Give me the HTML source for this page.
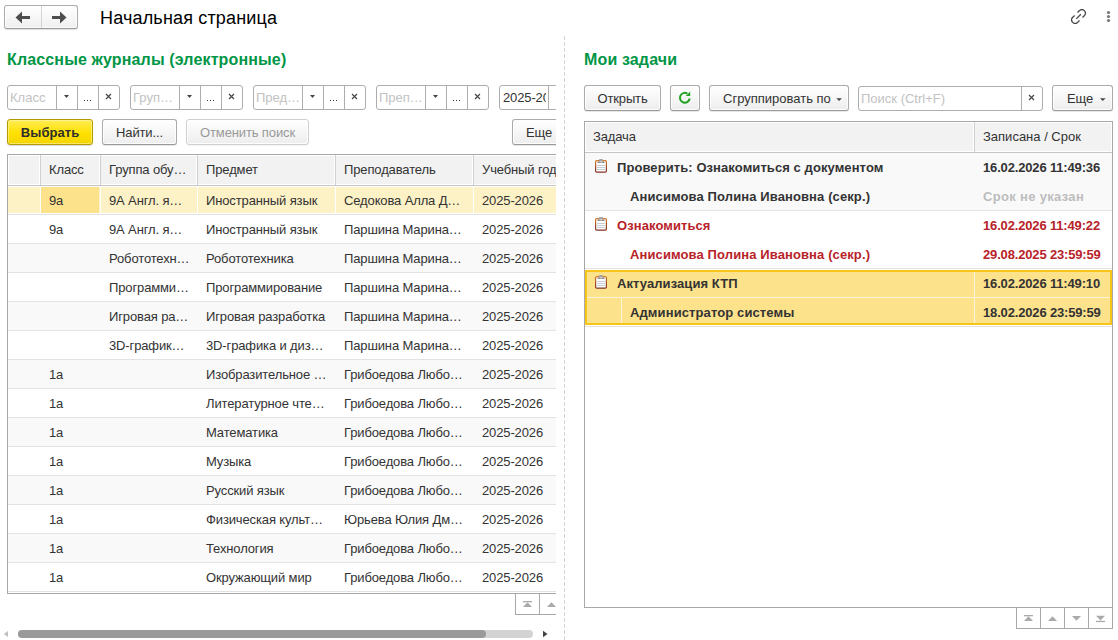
<!DOCTYPE html><html><head><meta charset="utf-8"><style>
*{box-sizing:border-box;margin:0;padding:0}
html,body{width:1118px;height:640px;overflow:hidden;background:#fff}
body{position:relative;font-family:"Liberation Sans",sans-serif;font-size:13px;color:#333}
.a{position:absolute}
.t{position:absolute;white-space:nowrap;letter-spacing:-0.13px}
.b{font-weight:bold;letter-spacing:0.08px}
.btn{position:absolute;height:26px;line-height:25px;border:1px solid #ababab;border-bottom-color:#999;border-radius:3px;background:linear-gradient(#fff,#ededed);box-shadow:inset 0 0 0 1px rgba(255,255,255,.85),0 1px 1px rgba(0,0,0,.10);color:#333;text-align:center;white-space:nowrap;letter-spacing:-0.13px}
.fld{position:absolute;height:25px;border:1px solid #adadad;border-radius:3px;background:#fff;overflow:hidden}
.ph{position:absolute;white-space:nowrap;letter-spacing:0;color:#c2c2c2}
.vs{position:absolute;width:1px;background:#adadad}
.green{color:#009646;font-weight:bold;font-size:16px;letter-spacing:0.14px}
</style></head><body>
<div class="a" style="left:4px;top:5px;width:74px;height:24px;border:1px solid #adadad;border-bottom-color:#9a9a9a;border-radius:3px;background:linear-gradient(#fff,#efefef);box-shadow:inset 0 0 0 1px rgba(255,255,255,.85),0 1px 1px rgba(0,0,0,.12)"></div>
<div class="a" style="left:41px;top:6px;width:1px;height:22px;background:#d4d4d4"></div>
<svg class="a" style="left:0;top:0" width="80" height="40">
<polygon points="15.5,17.5 22,11.5 22,23.5" fill="#4d4d4d"/><rect x="22" y="16" width="8" height="3" fill="#4d4d4d"/>
<polygon points="66.5,17.5 60,11.5 60,23.5" fill="#4d4d4d"/><rect x="52" y="16" width="8" height="3" fill="#4d4d4d"/></svg>
<div class="t" style="left:100px;top:5.5px;font-size:18px;line-height:24px;color:#000;letter-spacing:0.17px">Начальная страница</div>
<svg class="a" style="left:1071px;top:9px" width="15" height="15" fill="none" stroke="#444" stroke-width="1.25">
<path d="M6.5,3.5 L8.53,1.53 A3.5,3.5 0 0 1 13.47,6.47 L11.5,8.5"/><path d="M3.6,6.5 L1.53,8.53 A3.5,3.5 0 0 0 6.47,13.47 L8.5,11.5"/><path d="M5.2,9.9 L9.9,5.2"/></svg>
<svg class="a" style="left:1105px;top:9px" width="8" height="16" fill="#777"><circle cx="3.5" cy="3.5" r="1.6"/><circle cx="3.5" cy="7.5" r="1.6"/><circle cx="3.5" cy="11.5" r="1.6"/></svg>
<div class="a" style="left:564px;top:36px;width:1px;height:604px;background:repeating-linear-gradient(#d4d4d4 0 4px,transparent 4px 6px)"></div>
<div class="a" style="left:0;top:0;width:556px;height:640px;overflow:hidden">
<div class="t green" style="left:7px;top:51px;line-height:18px">Классные журналы (электронные)</div>
<div class="fld" style="left:7px;top:85px;width:113px">
<div class="ph" style="left:2px;top:0;width:44px;line-height:23px;color:#c2c2c2;overflow:hidden;letter-spacing:0">Класс</div>
<div class="vs" style="left:48px;top:0;height:23px"></div>
<div class="vs" style="left:69px;top:0;height:23px"></div>
<div class="vs" style="left:90px;top:0;height:23px"></div>
<svg class="a" style="left:0;top:0" width="111" height="23"><polygon points="56,9 61,9 58.5,12" fill="#444"/><rect x="76" y="14" width="1" height="1" fill="#333"/><rect x="79" y="14" width="1" height="1" fill="#333"/><rect x="82" y="14" width="1" height="1" fill="#333"/><path d="M98,8 L103,13 M103,8 L98,13" stroke="#444" stroke-width="1.15"/></svg>
</div>
<div class="fld" style="left:130px;top:85px;width:113px">
<div class="ph" style="left:2px;top:0;width:44px;line-height:23px;color:#c2c2c2;overflow:hidden;letter-spacing:0">Груп…</div>
<div class="vs" style="left:48px;top:0;height:23px"></div>
<div class="vs" style="left:69px;top:0;height:23px"></div>
<div class="vs" style="left:90px;top:0;height:23px"></div>
<svg class="a" style="left:0;top:0" width="111" height="23"><polygon points="56,9 61,9 58.5,12" fill="#444"/><rect x="76" y="14" width="1" height="1" fill="#333"/><rect x="79" y="14" width="1" height="1" fill="#333"/><rect x="82" y="14" width="1" height="1" fill="#333"/><path d="M98,8 L103,13 M103,8 L98,13" stroke="#444" stroke-width="1.15"/></svg>
</div>
<div class="fld" style="left:253px;top:85px;width:113px">
<div class="ph" style="left:2px;top:0;width:44px;line-height:23px;color:#c2c2c2;overflow:hidden;letter-spacing:0">Пред…</div>
<div class="vs" style="left:48px;top:0;height:23px"></div>
<div class="vs" style="left:69px;top:0;height:23px"></div>
<div class="vs" style="left:90px;top:0;height:23px"></div>
<svg class="a" style="left:0;top:0" width="111" height="23"><polygon points="56,9 61,9 58.5,12" fill="#444"/><rect x="76" y="14" width="1" height="1" fill="#333"/><rect x="79" y="14" width="1" height="1" fill="#333"/><rect x="82" y="14" width="1" height="1" fill="#333"/><path d="M98,8 L103,13 M103,8 L98,13" stroke="#444" stroke-width="1.15"/></svg>
</div>
<div class="fld" style="left:376px;top:85px;width:113px">
<div class="ph" style="left:2px;top:0;width:44px;line-height:23px;color:#c2c2c2;overflow:hidden;letter-spacing:0">Преп…</div>
<div class="vs" style="left:48px;top:0;height:23px"></div>
<div class="vs" style="left:69px;top:0;height:23px"></div>
<div class="vs" style="left:90px;top:0;height:23px"></div>
<svg class="a" style="left:0;top:0" width="111" height="23"><polygon points="56,9 61,9 58.5,12" fill="#444"/><rect x="76" y="14" width="1" height="1" fill="#333"/><rect x="79" y="14" width="1" height="1" fill="#333"/><rect x="82" y="14" width="1" height="1" fill="#333"/><path d="M98,8 L103,13 M103,8 L98,13" stroke="#444" stroke-width="1.15"/></svg>
</div>
<div class="fld" style="left:499px;top:85px;width:113px">
<div class="ph" style="left:3px;top:0;width:43px;line-height:23px;color:#333;overflow:hidden;letter-spacing:-0.13px">2025-2026</div>
<div class="vs" style="left:48px;top:0;height:23px"></div>
<div class="vs" style="left:69px;top:0;height:23px"></div>
<div class="vs" style="left:90px;top:0;height:23px"></div>
<svg class="a" style="left:0;top:0" width="111" height="23"><polygon points="56,9 61,9 58.5,12" fill="#444"/><rect x="76" y="14" width="1" height="1" fill="#333"/><rect x="79" y="14" width="1" height="1" fill="#333"/><rect x="82" y="14" width="1" height="1" fill="#333"/><path d="M98,8 L103,13 M103,8 L98,13" stroke="#444" stroke-width="1.15"/></svg>
</div>
<div class="btn" style="left:7px;top:119px;width:86px;font-weight:bold;letter-spacing:0.05px;color:#2d2d2d;background:linear-gradient(#ffec55,#ffe100 55%,#f3d400);border-color:#b39a00;box-shadow:inset 0 0 0 1px rgba(255,250,200,.5),0 1px 1px rgba(0,0,0,.15)">Выбрать</div>
<div class="btn" style="left:102px;top:119px;width:75px">Найти...</div>
<div class="btn" style="left:186px;top:119px;width:123px;color:#999;border-color:#d0d0d0;box-shadow:inset 0 0 0 1px rgba(255,255,255,.85),0 1px 1px rgba(0,0,0,.05)">Отменить поиск</div>
<div class="btn" style="left:512px;top:119px;width:60px;text-align:left;padding-left:13px">Еще</div>
<div class="a" style="left:7px;top:154px;width:600px;height:440px;border:1px solid #a8a8a8;background:#fff"></div>
<div class="a" style="left:8px;top:155px;width:32px;height:30px;background:#f2f2f2;border:1px solid #fff"></div>
<div class="a" style="left:40px;top:155px;width:60px;height:30px;background:#f2f2f2;border:1px solid #fff"></div>
<div class="a" style="left:40px;top:155px;width:1px;height:30px;background:#d0d0d0"></div>
<div class="t" style="left:49px;top:155px;line-height:30px">Класс</div>
<div class="a" style="left:100px;top:155px;width:97px;height:30px;background:#f2f2f2;border:1px solid #fff"></div>
<div class="a" style="left:100px;top:155px;width:1px;height:30px;background:#d0d0d0"></div>
<div class="t" style="left:109px;top:155px;line-height:30px">Группа обу…</div>
<div class="a" style="left:197px;top:155px;width:138px;height:30px;background:#f2f2f2;border:1px solid #fff"></div>
<div class="a" style="left:197px;top:155px;width:1px;height:30px;background:#d0d0d0"></div>
<div class="t" style="left:206px;top:155px;line-height:30px">Предмет</div>
<div class="a" style="left:335px;top:155px;width:138px;height:30px;background:#f2f2f2;border:1px solid #fff"></div>
<div class="a" style="left:335px;top:155px;width:1px;height:30px;background:#d0d0d0"></div>
<div class="t" style="left:344px;top:155px;line-height:30px">Преподаватель</div>
<div class="a" style="left:473px;top:155px;width:147px;height:30px;background:#f2f2f2;border:1px solid #fff"></div>
<div class="a" style="left:473px;top:155px;width:1px;height:30px;background:#d0d0d0"></div>
<div class="t" style="left:482px;top:155px;line-height:30px">Учебный год</div>
<div class="a" style="left:8px;top:185px;width:600px;height:1px;background:#c6c6c6"></div>
<div class="a" style="left:8px;top:187px;width:600px;height:26px;background:#fdf1c6"></div>
<div class="a" style="left:41px;top:187px;width:58px;height:26px;background:#fde28c"></div>
<div class="a" style="left:40px;top:186px;width:1px;height:28px;background:#fff"></div>
<div class="a" style="left:100px;top:186px;width:1px;height:28px;background:#fff"></div>
<div class="a" style="left:197px;top:186px;width:1px;height:28px;background:#fff"></div>
<div class="a" style="left:335px;top:186px;width:1px;height:28px;background:#fff"></div>
<div class="a" style="left:473px;top:186px;width:1px;height:28px;background:#fff"></div>
<div class="a" style="left:8px;top:214px;width:600px;height:1px;background:#e2e2e2"></div>
<div class="t" style="left:49px;top:186px;line-height:29px">9а</div>
<div class="t" style="left:109px;top:186px;line-height:29px">9А Англ. я…</div>
<div class="t" style="left:206px;top:186px;line-height:29px">Иностранный язык</div>
<div class="t" style="left:344px;top:186px;line-height:29px">Седокова Алла Д…</div>
<div class="t" style="left:482px;top:186px;line-height:29px">2025-2026</div>
<div class="a" style="left:8px;top:243px;width:600px;height:1px;background:#e2e2e2"></div>
<div class="t" style="left:49px;top:215px;line-height:29px">9а</div>
<div class="t" style="left:109px;top:215px;line-height:29px">9А Англ. я…</div>
<div class="t" style="left:206px;top:215px;line-height:29px">Иностранный язык</div>
<div class="t" style="left:344px;top:215px;line-height:29px">Паршина Марина…</div>
<div class="t" style="left:482px;top:215px;line-height:29px">2025-2026</div>
<div class="a" style="left:8px;top:244px;width:600px;height:28px;background:#f9f9f9"></div>
<div class="a" style="left:8px;top:272px;width:600px;height:1px;background:#e2e2e2"></div>
<div class="t" style="left:109px;top:244px;line-height:29px">Робототехн…</div>
<div class="t" style="left:206px;top:244px;line-height:29px">Робототехника</div>
<div class="t" style="left:344px;top:244px;line-height:29px">Паршина Марина…</div>
<div class="t" style="left:482px;top:244px;line-height:29px">2025-2026</div>
<div class="a" style="left:8px;top:301px;width:600px;height:1px;background:#e2e2e2"></div>
<div class="t" style="left:109px;top:273px;line-height:29px">Программи…</div>
<div class="t" style="left:206px;top:273px;line-height:29px">Программирование</div>
<div class="t" style="left:344px;top:273px;line-height:29px">Паршина Марина…</div>
<div class="t" style="left:482px;top:273px;line-height:29px">2025-2026</div>
<div class="a" style="left:8px;top:302px;width:600px;height:28px;background:#f9f9f9"></div>
<div class="a" style="left:8px;top:330px;width:600px;height:1px;background:#e2e2e2"></div>
<div class="t" style="left:109px;top:302px;line-height:29px">Игровая ра…</div>
<div class="t" style="left:206px;top:302px;line-height:29px">Игровая разработка</div>
<div class="t" style="left:344px;top:302px;line-height:29px">Паршина Марина…</div>
<div class="t" style="left:482px;top:302px;line-height:29px">2025-2026</div>
<div class="a" style="left:8px;top:359px;width:600px;height:1px;background:#e2e2e2"></div>
<div class="t" style="left:109px;top:331px;line-height:29px">3D-график…</div>
<div class="t" style="left:206px;top:331px;line-height:29px">3D-графика и диз…</div>
<div class="t" style="left:344px;top:331px;line-height:29px">Паршина Марина…</div>
<div class="t" style="left:482px;top:331px;line-height:29px">2025-2026</div>
<div class="a" style="left:8px;top:360px;width:600px;height:28px;background:#f9f9f9"></div>
<div class="a" style="left:8px;top:388px;width:600px;height:1px;background:#e2e2e2"></div>
<div class="t" style="left:49px;top:360px;line-height:29px">1а</div>
<div class="t" style="left:206px;top:360px;line-height:29px">Изобразительное …</div>
<div class="t" style="left:344px;top:360px;line-height:29px">Грибоедова Любо…</div>
<div class="t" style="left:482px;top:360px;line-height:29px">2025-2026</div>
<div class="a" style="left:8px;top:417px;width:600px;height:1px;background:#e2e2e2"></div>
<div class="t" style="left:49px;top:389px;line-height:29px">1а</div>
<div class="t" style="left:206px;top:389px;line-height:29px">Литературное чте…</div>
<div class="t" style="left:344px;top:389px;line-height:29px">Грибоедова Любо…</div>
<div class="t" style="left:482px;top:389px;line-height:29px">2025-2026</div>
<div class="a" style="left:8px;top:418px;width:600px;height:28px;background:#f9f9f9"></div>
<div class="a" style="left:8px;top:446px;width:600px;height:1px;background:#e2e2e2"></div>
<div class="t" style="left:49px;top:418px;line-height:29px">1а</div>
<div class="t" style="left:206px;top:418px;line-height:29px">Математика</div>
<div class="t" style="left:344px;top:418px;line-height:29px">Грибоедова Любо…</div>
<div class="t" style="left:482px;top:418px;line-height:29px">2025-2026</div>
<div class="a" style="left:8px;top:475px;width:600px;height:1px;background:#e2e2e2"></div>
<div class="t" style="left:49px;top:447px;line-height:29px">1а</div>
<div class="t" style="left:206px;top:447px;line-height:29px">Музыка</div>
<div class="t" style="left:344px;top:447px;line-height:29px">Грибоедова Любо…</div>
<div class="t" style="left:482px;top:447px;line-height:29px">2025-2026</div>
<div class="a" style="left:8px;top:476px;width:600px;height:28px;background:#f9f9f9"></div>
<div class="a" style="left:8px;top:504px;width:600px;height:1px;background:#e2e2e2"></div>
<div class="t" style="left:49px;top:476px;line-height:29px">1а</div>
<div class="t" style="left:206px;top:476px;line-height:29px">Русский язык</div>
<div class="t" style="left:344px;top:476px;line-height:29px">Грибоедова Любо…</div>
<div class="t" style="left:482px;top:476px;line-height:29px">2025-2026</div>
<div class="a" style="left:8px;top:533px;width:600px;height:1px;background:#e2e2e2"></div>
<div class="t" style="left:49px;top:505px;line-height:29px">1а</div>
<div class="t" style="left:206px;top:505px;line-height:29px">Физическая культ…</div>
<div class="t" style="left:344px;top:505px;line-height:29px">Юрьева Юлия Дм…</div>
<div class="t" style="left:482px;top:505px;line-height:29px">2025-2026</div>
<div class="a" style="left:8px;top:534px;width:600px;height:28px;background:#f9f9f9"></div>
<div class="a" style="left:8px;top:562px;width:600px;height:1px;background:#e2e2e2"></div>
<div class="t" style="left:49px;top:534px;line-height:29px">1а</div>
<div class="t" style="left:206px;top:534px;line-height:29px">Технология</div>
<div class="t" style="left:344px;top:534px;line-height:29px">Грибоедова Любо…</div>
<div class="t" style="left:482px;top:534px;line-height:29px">2025-2026</div>
<div class="a" style="left:8px;top:591px;width:600px;height:1px;background:#e2e2e2"></div>
<div class="t" style="left:49px;top:563px;line-height:29px">1а</div>
<div class="t" style="left:206px;top:563px;line-height:29px">Окружающий мир</div>
<div class="t" style="left:344px;top:563px;line-height:29px">Грибоедова Любо…</div>
<div class="t" style="left:482px;top:563px;line-height:29px">2025-2026</div>
<div class="a" style="left:515px;top:593px;width:25px;height:22px;border:1px solid #a8a8a8;background:#fff"></div>
<svg class="a" style="left:515px;top:593px" width="24" height="22"><rect x="8" y="8" width="9" height="1.3" fill="#aaa"/><polygon points="8,14 17,14 12.5,9.3" fill="#aaa"/></svg>
<div class="a" style="left:539px;top:593px;width:25px;height:22px;border:1px solid #a8a8a8;background:#fff"></div>
<svg class="a" style="left:539px;top:593px" width="24" height="22"><polygon points="8,14 17,14 12.5,9.2" fill="#aaa"/></svg>
<svg class="a" style="left:0;top:626px" width="556" height="14"><polygon points="3.8,8 8,4.9 8,11.1" fill="#c0c0c0"/><rect x="18" y="4" width="515" height="8" rx="4" fill="#d3d3d3"/><rect x="18" y="4" width="468" height="8" rx="4" fill="#9a9a9a"/><polygon points="547.5,8 543,4.8 543,11.2" fill="#444"/></svg>
</div>
<div class="t green" style="left:584px;top:51px;line-height:18px">Мои задачи</div>
<div class="btn" style="left:584px;top:85px;width:77px">Открыть</div>
<div class="btn" style="left:670px;top:85px;width:30px"></div>
<svg class="a" style="left:670px;top:85px" width="30" height="26"><path d="M19.7,13.5 A4.9,4.9 0 1 1 17.4,8.6" fill="none" stroke="#22a322" stroke-width="2"/><polygon points="20.2,6.6 20.2,11 15.8,11" fill="#22a322"/></svg>
<div class="btn" style="left:709px;top:85px;width:140px;text-align:left;padding-left:13px;letter-spacing:0">Сгруппировать по</div>
<svg class="a" style="left:830px;top:85px" width="15" height="26"><polygon points="6.3,13.2 11.9,13.2 9.1,16" fill="#444"/></svg>
<div class="fld" style="left:858px;top:86px;width:185px"><div class="ph" style="left:2px;top:0;line-height:23px;color:#c2c2c2;letter-spacing:0">Поиск (Ctrl+F)</div><div class="vs" style="left:162px;top:0;height:23px"></div><svg class="a" style="left:163px;top:0" width="21" height="23"><path d="M7,8 L12,13 M12,8 L7,13" stroke="#444" stroke-width="1.15"/></svg></div>
<div class="btn" style="left:1052px;top:85px;width:61px;text-align:left;padding-left:14px">Еще</div>
<svg class="a" style="left:1095px;top:85px" width="15" height="26"><polygon points="5,13.2 10.6,13.2 7.8,16" fill="#444"/></svg>
<div class="a" style="left:584px;top:121px;width:529px;height:487px;border:1px solid #a8a8a8;background:#fff"></div>
<div class="a" style="left:585px;top:122px;width:389px;height:30px;background:#f2f2f2;border:1px solid #fff"></div>
<div class="a" style="left:974px;top:122px;width:138px;height:30px;background:#f2f2f2;border:1px solid #fff"></div>
<div class="a" style="left:974px;top:122px;width:1px;height:30px;background:#d0d0d0"></div>
<div class="t" style="left:593px;top:122px;line-height:30px">Задача</div>
<div class="t" style="left:983px;top:122px;line-height:30px;letter-spacing:0">Записана / Срок</div>
<div class="a" style="left:585px;top:152px;width:527px;height:1px;background:#c6c6c6"></div>
<div class="a" style="left:585px;top:153px;width:527px;height:57px;background:#f9f9f9"></div>
<div class="a" style="left:585px;top:210px;width:527px;height:1px;background:#e2e2e2"></div>
<svg class="a" style="left:595px;top:159px" width="13" height="15">
<defs><linearGradient id="cg0" x1="0" y1="0" x2="0" y2="1"><stop offset="0" stop-color="#d4782a"/><stop offset="1" stop-color="#7d2e22"/></linearGradient></defs>
<rect x="0.6" y="1.6" width="10.8" height="11.6" rx="1.2" fill="#fff" stroke="url(#cg0)" stroke-width="1.2"/>
<rect x="4" y="0" width="4" height="2" rx="0.8" fill="#a6a6a6"/><path d="M2.2,3.9 L3.2,2.2 L8.8,2.2 L9.8,3.9 Z" fill="#8c8c8c"/><rect x="4.6" y="2.4" width="2.8" height="0.9" fill="#e8e8e8"/>
<rect x="2" y="6" width="8" height="1" fill="#c8ced8"/><rect x="2" y="8" width="8" height="1" fill="#c8ced8"/><rect x="2" y="10" width="8" height="1" fill="#c8ced8"/></svg>
<div class="t b" style="left:617px;top:153px;line-height:29px;color:#333">Проверить: Ознакомиться с документом</div>
<div class="t b" style="left:630px;top:182px;line-height:29px;color:#333;letter-spacing:0.11px">Анисимова Полина Ивановна (секр.)</div>
<div class="t b" style="left:983px;top:153px;line-height:29px;color:#333;letter-spacing:-0.16px">16.02.2026 11:49:36</div>
<div class="t b" style="left:983px;top:182px;line-height:29px;color:#bdbdbd;letter-spacing:0.32px">Срок не указан</div>
<div class="a" style="left:585px;top:211px;width:527px;height:57px;background:#fff"></div>
<div class="a" style="left:585px;top:268px;width:527px;height:1px;background:#e2e2e2"></div>
<svg class="a" style="left:595px;top:217px" width="13" height="15">
<defs><linearGradient id="cg1" x1="0" y1="0" x2="0" y2="1"><stop offset="0" stop-color="#d4782a"/><stop offset="1" stop-color="#7d2e22"/></linearGradient></defs>
<rect x="0.6" y="1.6" width="10.8" height="11.6" rx="1.2" fill="#fff" stroke="url(#cg1)" stroke-width="1.2"/>
<rect x="4" y="0" width="4" height="2" rx="0.8" fill="#a6a6a6"/><path d="M2.2,3.9 L3.2,2.2 L8.8,2.2 L9.8,3.9 Z" fill="#8c8c8c"/><rect x="4.6" y="2.4" width="2.8" height="0.9" fill="#e8e8e8"/>
<rect x="2" y="6" width="8" height="1" fill="#c8ced8"/><rect x="2" y="8" width="8" height="1" fill="#c8ced8"/><rect x="2" y="10" width="8" height="1" fill="#c8ced8"/></svg>
<div class="t b" style="left:617px;top:211px;line-height:29px;color:#b82229">Ознакомиться</div>
<div class="t b" style="left:630px;top:240px;line-height:29px;color:#b82229;letter-spacing:0.11px">Анисимова Полина Ивановна (секр.)</div>
<div class="t b" style="left:983px;top:211px;line-height:29px;color:#b82229;letter-spacing:-0.16px">16.02.2026 11:49:22</div>
<div class="t b" style="left:983px;top:240px;line-height:29px;color:#b82229;letter-spacing:-0.16px">29.08.2025 23:59:59</div>
<div class="a" style="left:585px;top:270px;width:527px;height:55px;background:#fde28c;border:2px solid #f7c41a"></div>
<div class="a" style="left:587px;top:297px;width:523px;height:1px;background:#fff5d6"></div>
<div class="a" style="left:621px;top:298px;width:1px;height:25px;background:#fff5d6"></div>
<div class="a" style="left:974px;top:272px;width:1px;height:51px;background:#fff5d6"></div>
<div class="a" style="left:585px;top:326px;width:527px;height:1px;background:#e2e2e2"></div>
<svg class="a" style="left:595px;top:275px" width="13" height="15">
<defs><linearGradient id="cg2" x1="0" y1="0" x2="0" y2="1"><stop offset="0" stop-color="#d4782a"/><stop offset="1" stop-color="#7d2e22"/></linearGradient></defs>
<rect x="0.6" y="1.6" width="10.8" height="11.6" rx="1.2" fill="#fff" stroke="url(#cg2)" stroke-width="1.2"/>
<rect x="4" y="0" width="4" height="2" rx="0.8" fill="#a6a6a6"/><path d="M2.2,3.9 L3.2,2.2 L8.8,2.2 L9.8,3.9 Z" fill="#8c8c8c"/><rect x="4.6" y="2.4" width="2.8" height="0.9" fill="#e8e8e8"/>
<rect x="2" y="6" width="8" height="1" fill="#c8ced8"/><rect x="2" y="8" width="8" height="1" fill="#c8ced8"/><rect x="2" y="10" width="8" height="1" fill="#c8ced8"/></svg>
<div class="t b" style="left:617px;top:269px;line-height:29px;color:#333">Актуализация КТП</div>
<div class="t b" style="left:630px;top:298px;line-height:29px;color:#333;letter-spacing:0.11px">Администратор системы</div>
<div class="t b" style="left:983px;top:269px;line-height:29px;color:#333;letter-spacing:-0.16px">16.02.2026 11:49:10</div>
<div class="t b" style="left:983px;top:298px;line-height:29px;color:#333;letter-spacing:-0.16px">18.02.2026 23:59:59</div>
<div class="a" style="left:1016px;top:607px;width:25px;height:22px;border:1px solid #a8a8a8;background:#fff"></div>
<svg class="a" style="left:1016px;top:607px" width="24" height="22"><rect x="8" y="8" width="9" height="1.3" fill="#aaa"/><polygon points="8,14 17,14 12.5,9.3" fill="#aaa"/></svg>
<div class="a" style="left:1040px;top:607px;width:25px;height:22px;border:1px solid #a8a8a8;background:#fff"></div>
<svg class="a" style="left:1040px;top:607px" width="24" height="22"><polygon points="8,14 17,14 12.5,9.2" fill="#aaa"/></svg>
<div class="a" style="left:1064px;top:607px;width:25px;height:22px;border:1px solid #a8a8a8;background:#fff"></div>
<svg class="a" style="left:1064px;top:607px" width="24" height="22"><polygon points="8,9 17,9 12.5,13.8" fill="#aaa"/></svg>
<div class="a" style="left:1088px;top:607px;width:25px;height:22px;border:1px solid #a8a8a8;background:#fff"></div>
<svg class="a" style="left:1088px;top:607px" width="24" height="22"><polygon points="8,8.8 17,8.8 12.5,13.4" fill="#aaa"/><rect x="8" y="13.8" width="9" height="1.3" fill="#aaa"/></svg>
</body></html>
